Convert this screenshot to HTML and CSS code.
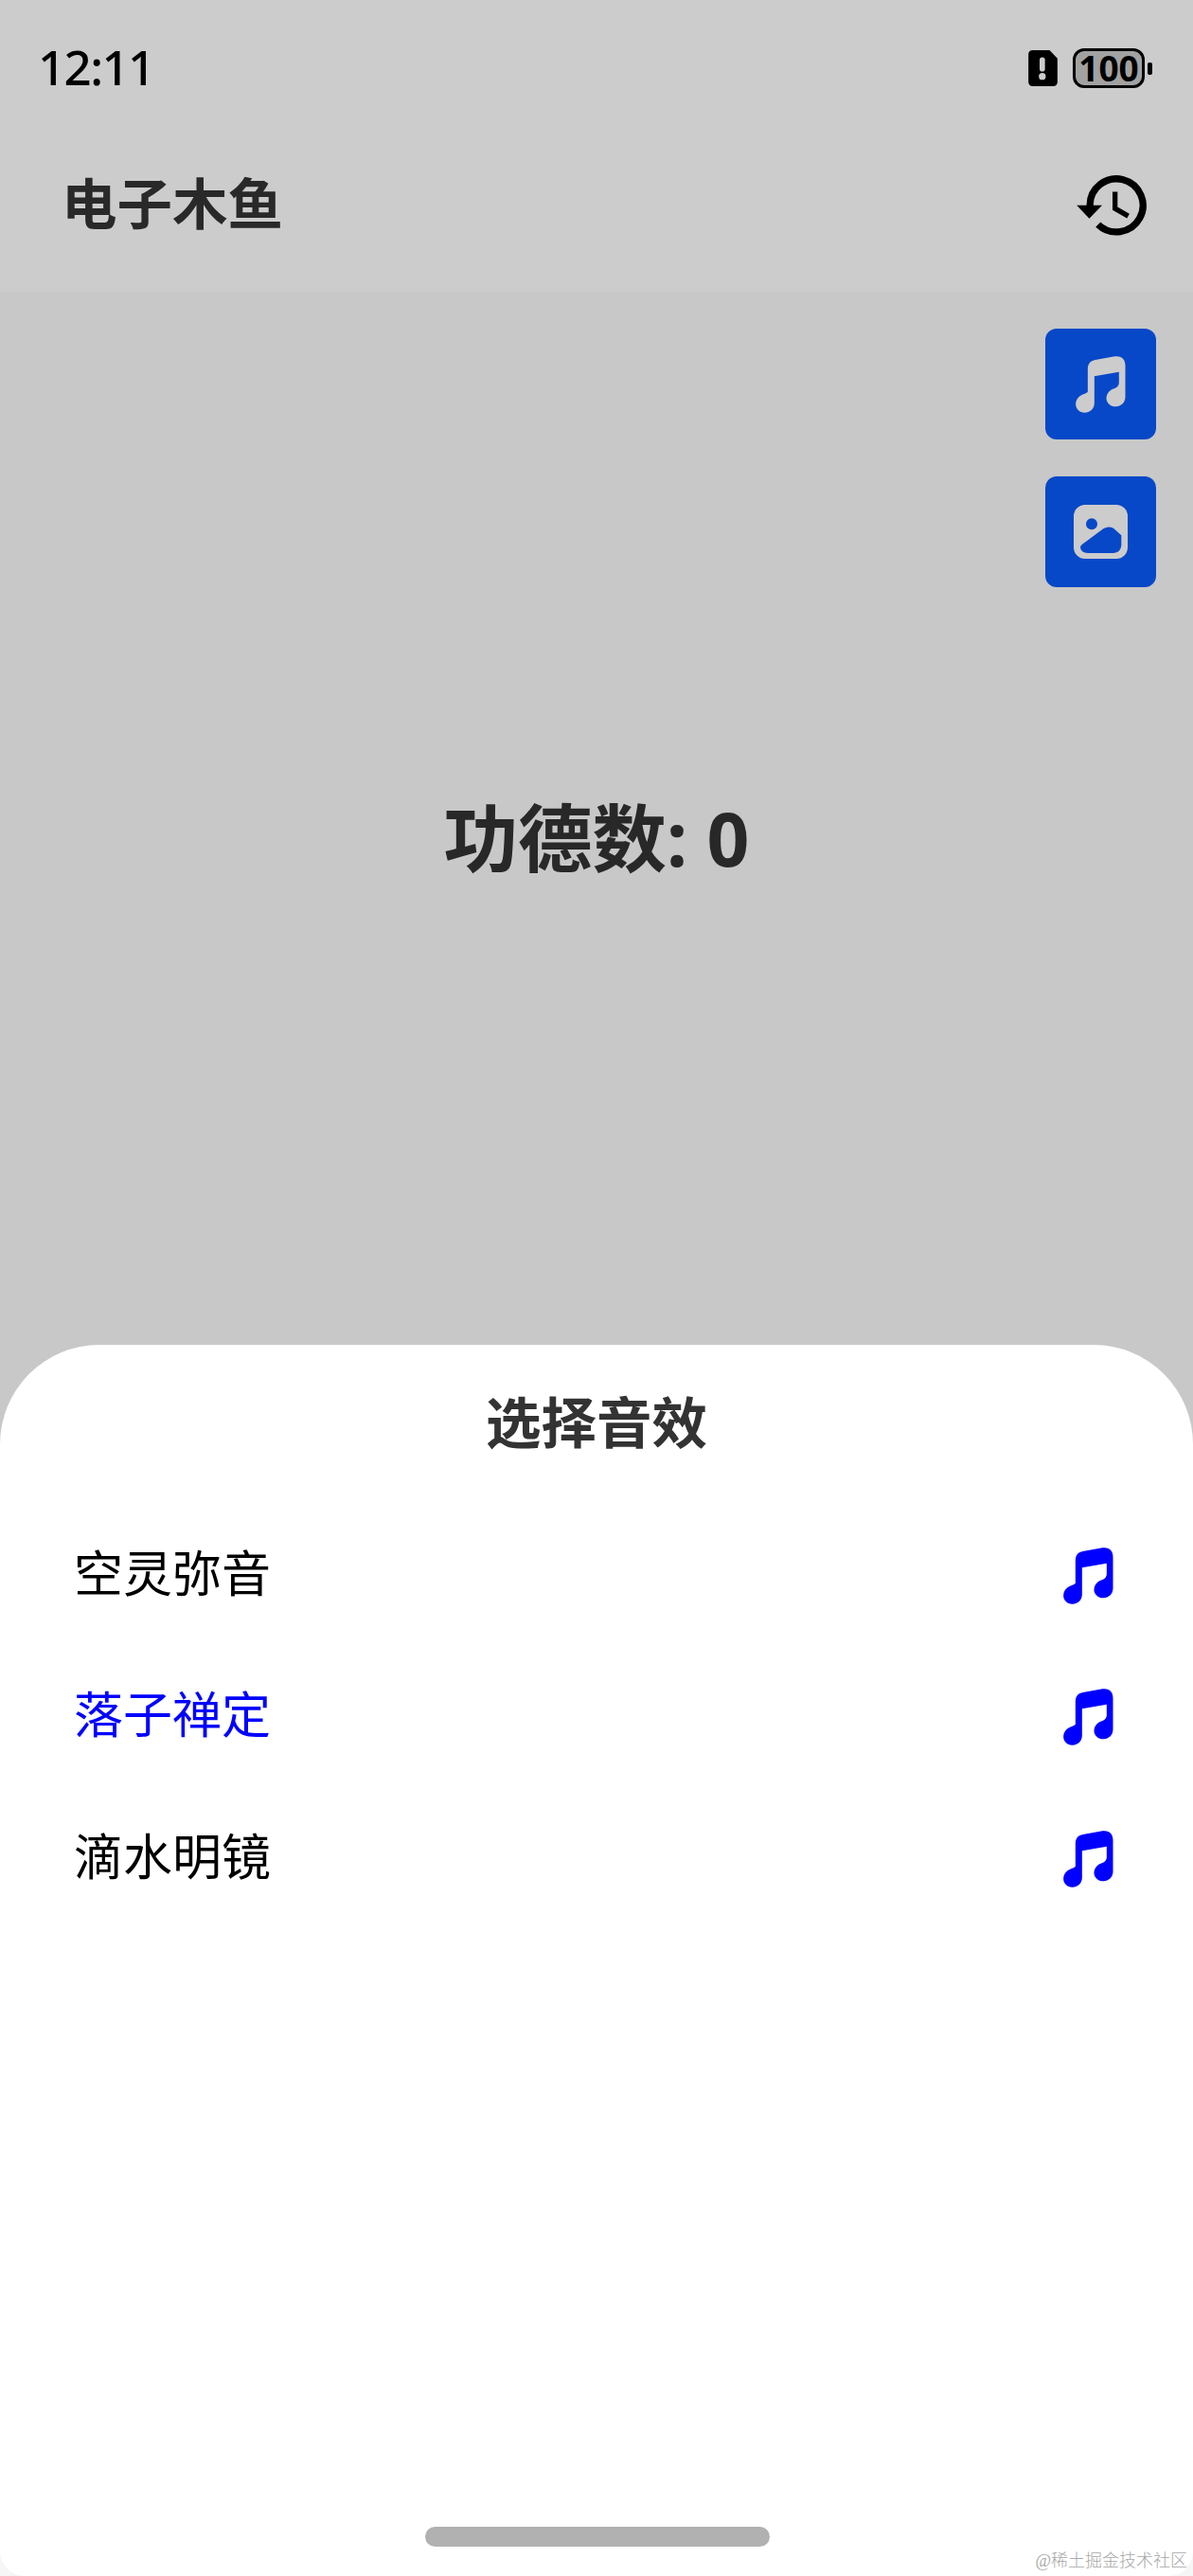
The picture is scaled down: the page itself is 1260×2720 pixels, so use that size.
FILE: index.html
```html
<!DOCTYPE html>
<html lang="zh-CN">
<head>
    <meta charset="UTF-8">
    <meta name="viewport" content="width=device-width, initial-scale=1.0">
    <title>电子木鱼</title>
    <link rel="stylesheet" href="styles.css">
</head>
<body>

    <!-- shared music note icon -->
    <svg class="symbols">
        <symbol id="music" viewBox="130 100 158 180">
            <path d="M168 213V142C168 122 178 115 192 112L254 101C275 98 287 110 287 130V230C287 247 273 260 257 260C240 260 227 248 227 234C227 218 240 206 252 203C262 199 267 193 267 184V150L189 164V249C189 266 175 279 158 279C142 279 130 267 130 253C130 236 142 226 154 221C163 218 168 213 168 213Z"/>
        </symbol>
    </svg>

    <div class="phone">
        <header>
            <div class="status-bar">
                <span class="time">12:11</span>
                <div class="status-icons">
                    <svg class="sim" viewBox="80 68 92 114">
                        <path d="M94 68H147L172 94V168Q172 182 158 182H94Q80 182 80 168V82Q80 68 94 68Z"/>
                        <path class="mark" d="M124 99V127"/>
                        <circle cx="124" cy="151" r="11"/>
                    </svg>
                    <div class="battery">100</div>
                    <div class="battery-tip"></div>
                </div>
            </div>
            <div class="app-bar">
                <h1>电子木鱼</h1>
                <svg class="history" viewBox="231 465 222 193">
                    <path class="ring" d="M273 563V561A84.500 84.500 0 1 1 299 622"/>
                    <path class="arrow" d="M231 561H312L271 603Z"/>
                    <path class="hands" d="M353 518V571L395 595"/>
                </svg>
            </div>
        </header>

        <main>
            <div class="tools">
                <button><svg class="note"><use href="#music"/></svg></button>
                <button>
                    <svg class="photo" viewBox="162 637 171 171">
                        <rect x="162" y="637" width="171" height="171" rx="36"/>
                        <circle cx="219" cy="698" r="18"/>
                        <path d="M189 762L257 712Q272 703 288 711L313 734V765Q311 788 288 790H207Q184 789 183 772Q183 766 189 762Z"/>
                    </svg>
                </button>
            </div>
            <p class="count">功德数: 0</p>
        </main>

        <section class="sheet">
            <h2>选择音效</h2>
            <ul>
                <li><span>空灵弥音</span><svg class="note"><use href="#music"/></svg></li>
                <li class="active"><span>落子禅定</span><svg class="note"><use href="#music"/></svg></li>
                <li><span>滴水明镜</span><svg class="note"><use href="#music"/></svg></li>
            </ul>
            <div class="home-bar"></div>
        </section>

        <span class="watermark">@稀土掘金技术社区</span>
    </div>

</body>
</html>
```

FILE: styles.css
```css
* {
    box-sizing: border-box;
    margin: 0;
    padding: 0;
}
body {
    font-family: "Noto Sans CJK SC", sans-serif;
    background-color: #f6f6f6;
}
svg {
    display: block;
}
.symbols {
    position: absolute;
    width: 0;
    height: 0;
}
.phone {
    position: relative;
    display: flex;
    flex-direction: column;
    width: 1260px;
    height: 2720px;
    overflow: hidden;
}
header {
    height: 308px;
    background-color: #cccccc;
}
.status-bar {
    display: flex;
    justify-content: space-between;
    align-items: center;
    height: 144px;
    padding: 0 43px 0 40px;
}
.time {
    padding-bottom: 5px;
    font-family: "Noto Sans", sans-serif;
    font-size: 51px;
    font-weight: 500;
    line-height: 60px;
    letter-spacing: -1.6px;
}
.status-icons {
    display: flex;
    align-items: center;
}
.sim {
    width: 31px;
    height: 38px;
    margin-right: 16px;
}
.sim .mark {
    stroke: #cccccc;
    stroke-width: 17;
    stroke-linecap: round;
}
.sim circle {
    fill: #cccccc;
}
.battery {
    width: 76px;
    height: 42px;
    border: 3px solid #000;
    border-radius: 12px;
    background-color: #a2a2a2;
    font-family: "Noto Sans", sans-serif;
    font-size: 37px;
    font-weight: 700;
    line-height: 35px;
    text-align: center;
}
.battery-tip {
    width: 5px;
    height: 13px;
    margin-left: 3px;
    border-radius: 2px;
    background-color: #000;
}
.app-bar {
    display: flex;
    justify-content: space-between;
    align-items: center;
    height: 146px;
    padding: 0 49px 0 65px;
}
h1 {
    padding-bottom: 10px;
    font-size: 58.500px;
    line-height: 84px;
    color: #292929;
}
.history {
    width: 74px;
    height: 64px;
}
.history .ring {
    fill: none;
    stroke: #000;
    stroke-width: 22;
}
.history .hands {
    fill: none;
    stroke: #000;
    stroke-width: 16;
}
main {
    height: 1232px;
    margin-bottom: -120px;
    padding-top: 39px;
    background-color: #c8c8c8;
}
.tools {
    display: flex;
    flex-direction: column;
    align-items: flex-end;
    gap: 39px;
    padding-right: 39px;
}
.tools button {
    display: flex;
    justify-content: center;
    align-items: center;
    width: 117px;
    height: 117px;
    border: none;
    border-radius: 12px;
    background-color: #0748c8;
}
.note {
    width: 53px;
    height: 60px;
    fill: #0000ff;
}
.tools .note {
    fill: #cccccc;
}
.photo {
    width: 57px;
    height: 57px;
    fill: #0748c8;
}
.photo rect {
    fill: #cccccc;
}
.count {
    margin-top: 209px;
    font-family: "Noto Sans", "Noto Sans CJK SC", sans-serif;
    font-size: 78.500px;
    font-weight: 700;
    line-height: 112px;
    text-align: center;
    color: #282828;
}
.sheet {
    position: relative;
    display: flex;
    flex-direction: column;
    flex: 1;
    padding: 37px 0 31px;
    border-radius: 105px 105px 26px 26px;
    background-color: #fff;
}
h2 {
    font-size: 58.500px;
    line-height: 84px;
    text-align: center;
    color: #333;
}
ul {
    margin-top: 48px;
    padding: 0 84px 0 78px;
    list-style: none;
}
li {
    display: flex;
    justify-content: space-between;
    align-items: center;
    height: 149.500px;
    font-size: 52px;
    color: #000;
}
li span {
    padding-bottom: 11px;
}
.active {
    color: #0000ff;
}
.home-bar {
    width: 364px;
    height: 21px;
    margin: auto 447px 0 449px;
    border-radius: 11px;
    background-color: #b1b1b1;
}
.watermark {
    position: absolute;
    right: 6px;
    bottom: 4px;
    font-family: "Liberation Serif", "Noto Sans CJK SC", serif;
    font-size: 18px;
    font-weight: 300;
    line-height: 24px;
    color: #a8a8a8;
}
```
